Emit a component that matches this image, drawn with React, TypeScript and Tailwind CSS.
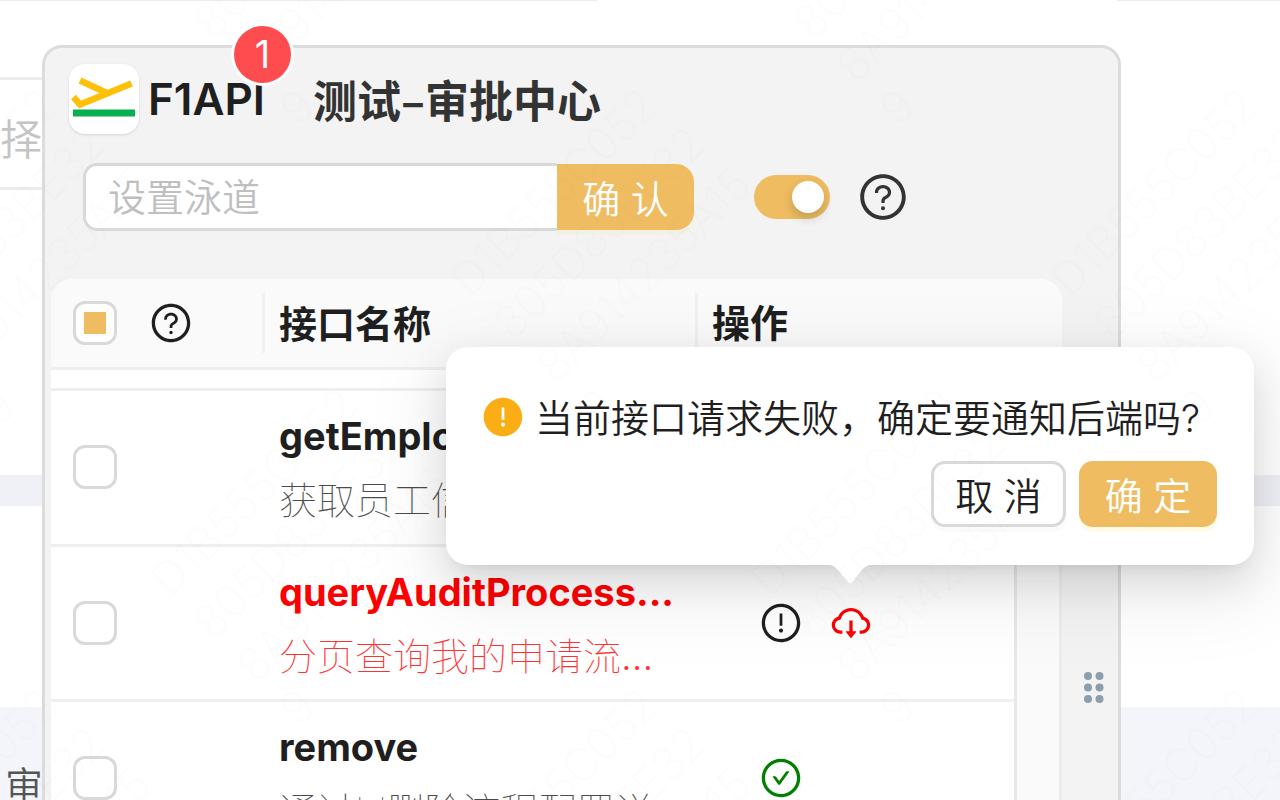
import { useEffect, useRef, useState } from 'react'
import {
  AiFillExclamationCircle,
  AiOutlineCheckCircle,
  AiOutlineCloudDownload,
  AiOutlineExclamationCircle,
  AiOutlineQuestionCircle,
} from 'react-icons/ai'

type Api = {
  name: string
  desc: string
  coupe?: boolean // description tronquée
  status: 'none' | 'failed' | 'ok'
}

const APIS: Api[] = [
  { name: 'getEmployeeInfo', desc: '获取员工信息', status: 'none' },
  { name: 'queryAuditProcess...', desc: '分页查询我的申请流', coupe: true, status: 'failed' },
  { name: 'remove', desc: '通过Id删除流程配置详', status: 'ok' },
]

const WATERMARK = ['D1B555C052', '805D83BE32', '8A914235A15', '9']

function Watermark() {
  const stamps = [[-137, 280], [163, 580], [463, 280], [163, -20], [463, 880], [-137, 880], [763, 580]]
  return (
    <svg className="pointer-events-none absolute inset-0 size-full" aria-hidden="true">
      <defs>
        <pattern id="wm" width="600" height="600" patternUnits="userSpaceOnUse">
          {stamps.map(([x, y]) => (
            <g key={`${x},${y}`} transform={`translate(${x} ${y}) rotate(-45)`} fill="#000" fillOpacity="0.010" fontSize="45" fontWeight="200">
              {WATERMARK.map((t, i) => <text key={t} x="-8" y={i * 61 + 18}>{t}</text>)}
            </g>
          ))}
        </pattern>
      </defs>
      <rect width="100%" height="100%" fill="url(#wm)" />
    </svg>
  )
}

function Logo() {
  return (
    <div className="flex size-[70px] shrink-0 items-center justify-center rounded-2xl bg-white shadow-sm">
      <svg width="70" height="70" viewBox="0 0 70 70" fill="none" aria-hidden="true">
        <path d="M11 16.500L39 29.500M62.500 19.500L11 40.500L4.500 33" stroke="#ffc00a" strokeWidth="6.500" />
        <path d="M4 49H66" stroke="#06b04f" strokeWidth="7" />
      </svg>
    </div>
  )
}

function Check({ label, partial = false }: { label: string; partial?: boolean }) {
  const ref = useRef<HTMLInputElement>(null)
  useEffect(() => {
    if (ref.current) ref.current.indeterminate = partial
  }, [partial])
  return (
    <input ref={ref} type="checkbox" aria-label={label}
      className="grid size-11 shrink-0 appearance-none place-content-center rounded-xl border-3 border-[#d9d9d9] bg-white before:size-[22px] before:content-[''] checked:before:bg-[#efbc62] indeterminate:before:bg-[#efbc62]" />
  )
}

function Columns() {
  return (
    <colgroup>
      <col className="w-[214px]" />
      <col className="w-[433px]" />
      <col />
    </colgroup>
  )
}

function Row({ api }: { api: Api }) {
  const failed = api.status === 'failed'
  return (
    <tr className="border-b-3 border-[#efefef]">
      <td className="pl-[22px]"><Check label={api.name} /></td>
      <td className={`h-[155px] overflow-hidden whitespace-nowrap pl-[14px] pt-0.5 leading-[62px] ${failed ? 'text-[#ff0000]' : 'text-[#1f1f1f]'}`}>
        <p className="font-bold">{api.name}</p>
        <p className="mt-0.5 font-thin opacity-80">
          {api.desc}{api.coupe && <span className="font-light">...</span>}
        </p>
      </td>
      <td className="pl-[61px]">
        <div className="flex gap-[26px]">
          {failed && (
            <>
              <button aria-label="错误详情"><AiOutlineExclamationCircle size={44} /></button>
              <button aria-label="通知后端" className="text-[#ff0000]"><AiOutlineCloudDownload size={44} /></button>
            </>
          )}
          {api.status === 'ok' && <AiOutlineCheckCircle size={44} className="text-[#008000]" />}
        </div>
      </td>
    </tr>
  )
}

function Confirm() {
  return (
    <div role="dialog" aria-labelledby="confirm-title"
      className="absolute right-[26px] top-[347px] w-[808px] rounded-[22px] bg-white py-[38px] pl-[38px] pr-[37px] shadow-[0_16px_43px_rgba(0,0,0,0.12),0_8px_16px_-11px_rgba(0,0,0,0.14),0_24px_75px_21px_rgba(0,0,0,0.05)]">
      <div className="mb-3 flex h-16 items-center gap-2.5">
        <AiFillExclamationCircle size={44} className="-ml-[3px] shrink-0 text-[#faad14]" />
        <h2 id="confirm-title" className="whitespace-nowrap pt-0.5">当前接口请求失败，确定要通知后端吗?</h2>
      </div>
      <div className="flex justify-end gap-[13px]">
        <button className="h-[66px] w-[135px] rounded-[14px] border-3 border-[#d9d9d9] bg-white pt-1 shadow-[0_5px_0_rgba(0,0,0,0.02)]">取 消</button>
        <button className="h-[66px] w-[138px] rounded-[14px] bg-[#efbc62] pt-1 text-white shadow-[0_5px_0_rgba(255,215,5,0.1)]">确 定</button>
      </div>
      <svg className="absolute left-[382px] top-full" width="44" height="19" viewBox="0 0 44 19" fill="#fff" aria-hidden="true">
        <path d="M0 0C5 0 7 2 10 5L19 16Q22 20 25 16L34 5C37 2 39 0 44 0Z" />
      </svg>
    </div>
  )
}

function Backdrop() {
  return (
    <div className="flex h-full flex-col">
      <div className="flex shrink-0 justify-between">
        <div className="h-px w-[597px] bg-[#ebebeb]" />
        <div className="h-px w-[163px] bg-[#ebebeb]" />
      </div>
      <div className="mt-[76px] h-[113px] w-64 shrink-0 border-y-3 border-[#ececec]">
        <p className="text-[42px] leading-[119px] text-[#c4c4c4]">择</p>
      </div>
      <div className="mt-[285px] h-[31px] shrink-0 bg-[#f0f1f6]" />
      <div className="mt-[201px] flex-1 bg-[#f4f5fa] pl-[5px] pt-[50px]">
        <p className="text-[#555]">审</p>
      </div>
    </div>
  )
}

export default function App() {
  const [lane, setLane] = useState('')
  const [enabled, setEnabled] = useState(true)

  return (
    <div className="relative h-screen overflow-hidden bg-white font-[Inter,'Noto_Sans_CJK_SC',sans-serif] text-[38px] font-[350] text-[#1f1f1f]">
      <Backdrop />

      {/* Panneau flottant */}
      <main className="absolute -bottom-[60px] left-[42px] right-[159px] top-[45px] flex flex-col rounded-[20px] border-3 border-[#dcdcdc] bg-[#f3f3f3]">
        <header className="flex items-center pl-6 pt-4">
          <Logo />
          <div className="relative ml-[9px]">
            <h1 className="text-[44px] font-semibold leading-[70px]">F1API</h1>
            <span className="absolute -right-[26px] -top-[38px] flex size-[57px] items-center justify-center rounded-full bg-[#ff4d4f] font-normal text-white ring-3 ring-white">1</span>
          </div>
          <h2 className="ml-12 font-['Noto_Sans_CJK_SC',sans-serif] text-[44px] font-semibold leading-[70px] text-[#333]">测试–审批中心</h2>
        </header>

        <div className="mt-[29px] flex items-center pl-[38px]">
          <input value={lane} onChange={e => setLane(e.target.value)} placeholder="设置泳道" aria-label="设置泳道"
            className="h-[68px] w-[474px] rounded-l-[14px] border-3 border-r-0 border-[#d9d9d9] bg-white pl-[22px] placeholder:text-[#bfbfbf] focus:outline-none" />
          <button className="h-[66px] w-[137px] rounded-r-[18px] bg-[#efbc62] pt-1 text-white shadow-[0_5px_0_rgba(255,215,5,0.06)]">确 认</button>
          <button role="switch" aria-checked={enabled} aria-label="启用" onClick={() => setEnabled(v => !v)}
            className={`ml-[60px] flex h-11 w-[76px] items-center rounded-full px-[6px] ${enabled ? 'justify-end bg-[#efbc62]' : 'bg-[#bfbfbf]'}`}>
            <span className="size-8 rounded-full bg-white shadow-[0_5px_11px_rgba(0,35,11,0.2)]" />
          </button>
          <AiOutlineQuestionCircle size={52} className="ml-[27px] text-[#333]" />
        </div>

        <section className="ml-[6px] mr-[56px] mt-12 flex flex-1 flex-col overflow-hidden rounded-t-[22px] bg-white">
          <table className="w-full table-fixed bg-[#fafafa] text-left">
            <Columns />
            <thead>
              <tr className="h-[89px] border-b-3 border-[#efefef] font-semibold">
                <th className="p-0">
                  <div className="flex h-[60px] items-center gap-8 border-r-3 border-[#f0f0f0] pl-[22px]">
                    <Check label="全选" partial />
                    <AiOutlineQuestionCircle size={44} />
                  </div>
                </th>
                <th className="p-0">
                  <div className="h-[60px] border-r-3 border-[#f0f0f0] pl-[14px] leading-[62px]">接口名称</div>
                </th>
                <th className="p-0 pl-[14px] leading-[62px]">操作</th>
              </tr>
            </thead>
          </table>
          <div className="flex flex-1 overflow-hidden">
            <div className="flex-1">
              <div className="h-[21px] border-b-3 border-[#efefef]" />
              <table className="w-full table-fixed">
                <Columns />
                <tbody>
                  {APIS.map(api => <Row key={api.name} api={api} />)}
                </tbody>
              </table>
            </div>
            <div className="w-12 border-x-3 border-l-[#e8e8e8] border-r-[#ededed] bg-[#fafafa]" />
          </div>
        </section>

        {/* Poignée de redimensionnement */}
        <svg className="absolute right-[14px] top-[624px]" width="20" height="31" viewBox="0 0 20 31" fill="#8e9dac" aria-hidden="true">
          {[4, 15.5, 27].map(y => (
            <g key={y}><circle cx="4" cy={y} r="4" /><circle cx="15.500" cy={y} r="4" /></g>
          ))}
        </svg>
      </main>

      <Confirm />
      <Watermark />
    </div>
  )
}
